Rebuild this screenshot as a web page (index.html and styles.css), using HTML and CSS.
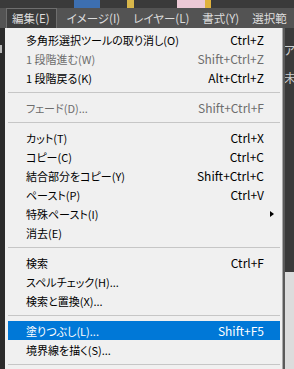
FILE: index.html
```html
<!DOCTYPE html>
<html lang="ja">
<head>
    <meta charset="UTF-8">
    <meta name="viewport" content="width=device-width, initial-scale=1.0">
    <title>編集メニュー</title>
    <link rel="stylesheet" href="styles.css">
</head>
<body>
    <div class="photo-strip">
        <span class="patch blue"></span>
        <span class="patch yellow"></span>
        <span class="patch pink"></span>
        <span class="patch gold"></span>
    </div>

    <div class="menubar">
        <span class="bar-item active">編集(E)</span>
        <span class="bar-item">イメージ(I)</span>
        <span class="bar-item">レイヤー(L)</span>
        <span class="bar-item">書式(Y)</span>
        <span class="bar-item">選択範</span>
    </div>

    <div class="workspace">
        <div class="left-edge">
            <span class="edge-tab"></span>
        </div>

        <div class="menu">
            <div class="item"><span>多角形選択ツールの取り消し(O)</span><span class="key">Ctrl+Z</span></div>
            <div class="item disabled"><span>1 段階進む(W)</span><span class="key">Shift+Ctrl+Z</span></div>
            <div class="item"><span>1 段階戻る(K)</span><span class="key">Alt+Ctrl+Z</span></div>
            <div class="sep"></div>
            <div class="item disabled"><span>フェード(D)...</span><span class="key">Shift+Ctrl+F</span></div>
            <div class="sep"></div>
            <div class="item"><span>カット(T)</span><span class="key">Ctrl+X</span></div>
            <div class="item"><span>コピー(C)</span><span class="key">Ctrl+C</span></div>
            <div class="item"><span>結合部分をコピー(Y)</span><span class="key">Shift+Ctrl+C</span></div>
            <div class="item"><span>ペースト(P)</span><span class="key">Ctrl+V</span></div>
            <div class="item"><span>特殊ペースト(I)</span><span class="arrow"></span></div>
            <div class="item"><span>消去(E)</span></div>
            <div class="sep"></div>
            <div class="item"><span>検索</span><span class="key">Ctrl+F</span></div>
            <div class="item"><span>スペルチェック(H)...</span></div>
            <div class="item"><span>検索と置換(X)...</span></div>
            <div class="sep"></div>
            <div class="item selected"><span>塗りつぶし(L)...</span><span class="key">Shift+F5</span></div>
            <div class="item"><span>境界線を描く(S)...</span></div>
            <div class="sep"></div>
        </div>

        <div class="right-panel">
            <span class="panel-text">アフ</span>
            <span class="panel-text">未</span>
            <div class="panel-lower"></div>
        </div>
    </div>
</body>
</html>
```

FILE: styles.css
```css
* {
    box-sizing: border-box;
}
body {
    margin: 0;
    width: 294px;
    height: 369px;
    overflow: hidden;
    background: #2e2e2e;
    font-family: "Noto Sans CJK JP", sans-serif;
    font-feature-settings: "palt";
}
.photo-strip {
    height: 8px;
    background: #3a3a3a;
    display: flex;
}
.patch {
    height: 8px;
}
.patch.blue {
    width: 26px;
    margin-left: 74px;
    background: #3d6fb0;
}
.patch.yellow {
    width: 7px;
    margin-left: 27px;
    background: #d8b64a;
}
.patch.pink {
    width: 28px;
    margin-left: 43px;
    background: #ecc9d6;
}
.patch.gold {
    width: 6px;
    background: #e0b23c;
}
.menubar {
    height: 20px;
    background: #535353;
    display: flex;
    align-items: stretch;
    padding-left: 6px;
    white-space: nowrap;
    overflow: hidden;
}
.bar-item {
    color: #dcdcdc;
    font-size: 11.5px;
    line-height: 19px;
    padding: 0 6px 0 5px;
    border: 1px solid transparent;
    border-bottom: none;
}
.bar-item.active {
    background: #3c3c3c;
    border-color: #6e6e6e;
    margin-right: 4px;
}
.workspace {
    display: flex;
    height: 341px;
}
.left-edge {
    width: 5px;
    background: #2b2b2b;
    padding-top: 17px;
}
.edge-tab {
    display: block;
    width: 2px;
    height: 8px;
    background: #b8b8b8;
}
.menu {
    width: 278px;
    background: #f0f0f0;
    padding: 2px 2px 0 3px;
    border-right: 1px solid #a8a8a8;
    box-shadow: 2px 0 0 #5a5a5a;
    position: relative;
    z-index: 1;
}
.item {
    height: 19px;
    display: flex;
    align-items: center;
    justify-content: space-between;
    padding: 0 16px 0 18px;
    font-size: 11px;
    color: #000;
    white-space: nowrap;
}
.item.disabled {
    color: #6d6d6d;
}
.item.selected {
    background: #0078d7;
    color: #fff;
}
.key {
    font-size: 12px;
}
.arrow {
    width: 0;
    height: 0;
    margin-right: -10px;
    border-top: 3.5px solid transparent;
    border-bottom: 3.5px solid transparent;
    border-left: 4px solid #000;
}
.sep {
    height: 11px;
    padding-top: 5px;
}
.sep::before {
    content: "";
    display: block;
    height: 1px;
    background: #c6c6c6;
}
.right-panel {
    flex: 1;
    background: #3a3a3a;
    padding-top: 15px;
    display: flex;
    flex-direction: column;
    gap: 14px;
    overflow: hidden;
    white-space: nowrap;
}
.panel-text {
    color: #cfcfcf;
    font-size: 12px;
    line-height: 14px;
    margin-left: 1px;
}
.panel-lower {
    margin-top: auto;
    height: 97px;
    background: #dcdcdc;
}
```
